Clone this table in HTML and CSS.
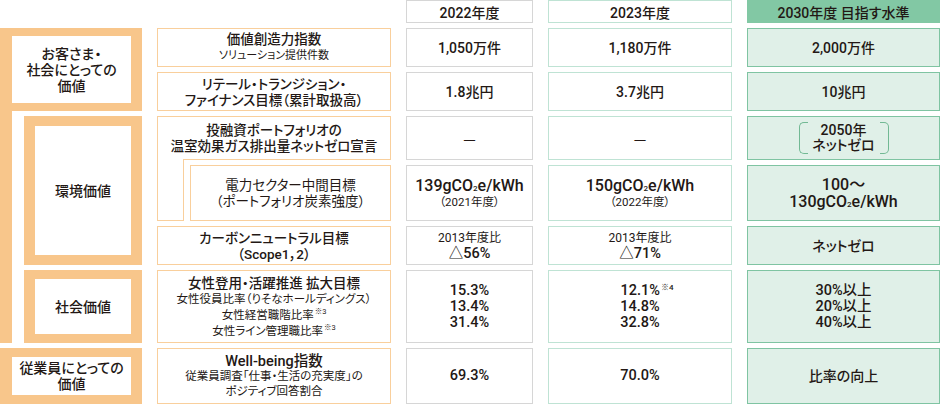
FILE: index.html
```html
<!DOCTYPE html>
<html lang="ja">
<head>
<meta charset="utf-8">
<title>価値指標</title>
<link rel="stylesheet" href="styles.css">
</head>
<body>
<div class="table">
  <div class="hd hd-22 col-c row-h">2022年度</div>
  <div class="hd hd-23 col-d row-h">2023年度</div>
  <div class="hd hd-30 col-e row-h">2030年度 目指す水準</div>

  <div class="bar"></div>
  <div class="frame cust"><div class="frame-in">お客さま・<br>社会にとっての<br>価値</div></div>
  <div class="frame env"><div class="frame-in">環境価値</div></div>
  <div class="frame soc"><div class="frame-in">社会価値</div></div>
  <div class="frame emp"><div class="frame-in">従業員にとっての<br>価値</div></div>

  <!-- row 1 -->
  <div class="lab col-b row-1"><p class="m">価値創造力指数</p><p class="s">ソリューション提供件数</p></div>
  <div class="val v22 col-c row-1"><p class="n">1,050万件</p></div>
  <div class="val v23 col-d row-1"><p class="n">1,180万件</p></div>
  <div class="val v30 col-e row-1"><p class="n">2,000万件</p></div>

  <!-- row 2 -->
  <div class="lab col-b row-2"><p class="m">リテール・トランジション・</p><p class="m">ファイナンス目標（累計取扱高）</p></div>
  <div class="val v22 col-c row-2"><p class="n">1.8兆円</p></div>
  <div class="val v23 col-d row-2"><p class="n">3.7兆円</p></div>
  <div class="val v30 col-e row-2"><p class="n">10兆円</p></div>

  <!-- rows 3-4 label (L shape) -->
  <div class="lshape col-b">
    <div class="l-top"><p class="m">投融資ポートフォリオの</p><p class="m">温室効果ガス排出量ネットゼロ宣言</p></div>
    <div class="l-bottom">
      <div class="l-strip"></div>
      <div class="l-rest">
        <div class="lab sublab"><p class="m reg">電力セクター中間目標</p><p class="m reg">（ポートフォリオ炭素強度）</p></div>
      </div>
    </div>
  </div>
  <div class="val v22 col-c row-3"><p class="n dash">—</p></div>
  <div class="val v23 col-d row-3"><p class="n dash">—</p></div>
  <div class="val v30 col-e row-3">
    <div class="bracket"><span class="bk bk-l"></span><p class="bk-txt n">2050年<br>ネットゼロ</p><span class="bk bk-r"></span></div>
  </div>

  <div class="val v22 col-c row-4"><p class="big">139gCO<sub>2</sub>e/kWh</p><p class="yr">（2021年度）</p></div>
  <div class="val v23 col-d row-4"><p class="big">150gCO<sub>2</sub>e/kWh</p><p class="yr">（2022年度）</p></div>
  <div class="val v30 col-e row-4"><p class="big">100〜</p><p class="big">130gCO<sub>2</sub>e/kWh</p></div>

  <!-- row 5 -->
  <div class="lab col-b row-5"><p class="m">カーボンニュートラル目標</p><p class="m">（Scope1，2）</p></div>
  <div class="val v22 col-c row-5"><p class="sm">2013年度比</p><p class="n14">△56%</p></div>
  <div class="val v23 col-d row-5"><p class="sm">2013年度比</p><p class="n14">△71%</p></div>
  <div class="val v30 col-e row-5"><p class="n">ネットゼロ</p></div>

  <!-- row 6 -->
  <div class="lab col-b row-6"><p class="m">女性登用・活躍推進&nbsp;拡大目標</p><p class="s2">女性役員比率（りそなホールディングス）</p><p class="s2">女性経営職階比率<sup>※3</sup></p><p class="s2">女性ライン管理職比率<sup>※3</sup></p></div>
  <div class="val v22 col-c row-6"><p class="n14">15.3%</p><p class="n14">13.4%</p><p class="n14">31.4%</p></div>
  <div class="val v23 col-d row-6"><p class="n14 shift">12.1%<sup class="note">※4</sup></p><p class="n14">14.8%</p><p class="n14">32.8%</p></div>
  <div class="val v30 col-e row-6"><p class="n14">30%以上</p><p class="n14">20%以上</p><p class="n14">40%以上</p></div>

  <!-- row 7 -->
  <div class="lab lab-7 col-b row-7"><p class="m big-m">Well-being指数</p><p class="s2">従業員調査「仕事・生活の充実度」の</p><p class="s2">ポジティブ回答割合</p></div>
  <div class="val v22 col-c row-7"><p class="n14">69.3%</p></div>
  <div class="val v23 col-d row-7"><p class="n14">70.0%</p></div>
  <div class="val v30 col-e row-7"><p class="n">比率の向上</p></div>
</div>
</body>
</html>
```

FILE: styles.css
```css
* { box-sizing: border-box; margin: 0; padding: 0; }

body {
  background: #ffffff;
  color: #231815;
  font-family: Roboto, "Noto Sans CJK JP", sans-serif;
  font-feature-settings: "palt";
}

.table {
  display: grid;
  width: 940px;
  grid-template-columns: 142px 234px 127px 184px 193px;
  grid-template-rows: 23px 39px 39px 44px 56px 39px 73px 56px;
  column-gap: 15px;
  row-gap: 5px;
}

.col-b { grid-column: 2; }
.col-c { grid-column: 3; }
.col-d { grid-column: 4; }
.col-e { grid-column: 5; }
.row-h { grid-row: 1; }
.row-1 { grid-row: 2; }
.row-2 { grid-row: 3; }
.row-3 { grid-row: 4; }
.row-4 { grid-row: 5; }
.row-5 { grid-row: 6; }
.row-6 { grid-row: 7; }
.row-7 { grid-row: 8; }

/* header */
.hd {
  display: flex;
  align-items: center;
  justify-content: center;
  font-size: 14px;
  font-weight: 500;
  border: 1px solid #d6d6d6;
}
.hd-23 { border-color: #bfe3d4; }
.hd-30 { background: #82c8a4; border-color: #82c8a4; }

/* left category frames */
.bar {
  grid-column: 1;
  grid-row: 2 / 8;
  width: 12px;
  background: #f8c68b;
}
.frame {
  grid-column: 1;
  border: 9px solid #f8c68b;
  border-left-width: 11px;
  border-right-width: 11px;
  background: #f8c68b;
  display: flex;
}
.frame-in {
  flex: 1;
  background: #ffffff;
  display: flex;
  align-items: center;
  justify-content: center;
  text-align: center;
  font-size: 14px;
  line-height: 16px;
  font-weight: 500;
}
.cust { grid-row: 2 / 4; border-width: 8px 11px 8px 12px; }
.env { grid-row: 4 / 7; margin-left: 24px; border-width: 10px 11px 10px 11px; }
.soc { grid-row: 7; margin-left: 24px; }
.emp { grid-row: 8; border-left-width: 12px; border-bottom-width: 10px; margin-bottom: -1px; }

/* label boxes */
.lab {
  border: 1px solid #f9cf9c;
  display: flex;
  flex-direction: column;
  align-items: center;
  justify-content: center;
  text-align: center;
}
.m { font-size: 13.5px; line-height: 16px; font-weight: 500; }
.m.reg { font-weight: 400; }
.s { font-size: 11px; line-height: 18px; }
.s2 { font-size: 11.5px; line-height: 16px; }
.lab-7 .m, .lab-7 .s2 { line-height: 15px; }
.big-m { font-size: 14.5px; }
sup { font-size: 7.5px; vertical-align: 5px; line-height: 0; margin-left: 1px; }

/* L-shaped label spanning rows 3 and 4 */
.lshape {
  grid-row: 4 / 6;
  display: flex;
  flex-direction: column;
}
.l-top {
  height: 43px;
  border: 1px solid #f9cf9c;
  border-bottom: none;
  display: flex;
  flex-direction: column;
  align-items: center;
  justify-content: center;
  text-align: center;
}
.l-bottom {
  flex: 1;
  display: flex;
}
.l-strip {
  width: 27px;
  border: 1px solid #f9cf9c;
  border-top: none;
}
.l-rest {
  flex: 1;
  border-top: 1px solid #f9cf9c;
  padding: 5px 0 0 6px;
  display: flex;
}
.sublab { flex: 1; }

/* value boxes */
.val {
  border: 1px solid #d6d6d6;
  display: flex;
  flex-direction: column;
  align-items: center;
  justify-content: center;
  text-align: center;
}
.v23 { border-color: #bfe3d4; }
.v30 { background: #e0f0e8; border-color: #7fc4a2; }
.n { font-size: 14px; line-height: 16px; font-weight: 500; }
.dash { font-family: "Noto Sans CJK JP", sans-serif; font-weight: 400; }
.n14 { font-size: 14.5px; line-height: 16px; font-weight: 500; }
.shift { margin-left: 14px; }
.sm { font-size: 12px; line-height: 16px; }
.big { font-size: 16px; line-height: 17px; font-weight: 500; }
.big sub { font-size: 8px; vertical-align: 0; line-height: 0; }
.yr { font-size: 11.5px; line-height: 16px; }
.note { font-size: 8px; vertical-align: 5px; }

/* 2050 bracket */
.bracket {
  display: flex;
  width: 90px;
  height: 32px;
}
.bk {
  width: 9px;
  border: 1px solid #72b994;
}
.bk-l { border-right: none; border-radius: 5px 0 0 5px; }
.bk-r { border-left: none; border-radius: 0 5px 5px 0; }
.bk-txt {
  flex: 1;
  display: flex;
  flex-direction: column;
  justify-content: center;
  line-height: 15px;
}
```
